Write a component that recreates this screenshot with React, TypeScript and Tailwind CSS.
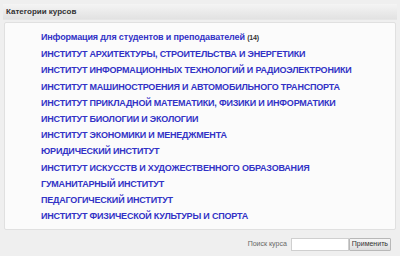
const categories = [
  'ИНСТИТУТ АРХИТЕКТУРЫ, СТРОИТЕЛЬСТВА И ЭНЕРГЕТИКИ',
  'ИНСТИТУТ ИНФОРМАЦИОННЫХ ТЕХНОЛОГИЙ И РАДИОЭЛЕКТРОНИКИ',
  'ИНСТИТУТ МАШИНОСТРОЕНИЯ И АВТОМОБИЛЬНОГО ТРАНСПОРТА',
  'ИНСТИТУТ ПРИКЛАДНОЙ МАТЕМАТИКИ, ФИЗИКИ И ИНФОРМАТИКИ',
  'ИНСТИТУТ БИОЛОГИИ И ЭКОЛОГИИ',
  'ИНСТИТУТ ЭКОНОМИКИ И МЕНЕДЖМЕНТА',
  'ЮРИДИЧЕСКИЙ ИНСТИТУТ',
  'ИНСТИТУТ ИСКУССТВ И ХУДОЖЕСТВЕННОГО ОБРАЗОВАНИЯ',
  'ГУМАНИТАРНЫЙ ИНСТИТУТ',
  'ПЕДАГОГИЧЕСКИЙ ИНСТИТУТ',
  'ИНСТИТУТ ФИЗИЧЕСКОЙ КУЛЬТУРЫ И СПОРТА',
]

export default function App() {
  return (
    <div
      className="w-[400px] h-[256px] overflow-hidden bg-[#efefef] pt-[4px]"
      style={{ fontFamily: '"Liberation Sans", Arial, sans-serif' }}
    >
      <div className="mx-[3px] h-[16px] flex items-center px-[3px] bg-gradient-to-b from-[#f4f4f4] to-[#e2e2e2] border-b border-[#e6e6e6]">
        <span className="text-[8px] font-bold text-[#333]">Категории курсов</span>
      </div>

      <div className="mx-[4px] mt-[2px] h-[208px] bg-[#fbfbfb] border border-[#e0e0e0] rounded-[2px] pl-[36px] pt-[8px]">
        <ul className="flex flex-col gap-[4px] text-[9px] leading-[12.2px] font-bold text-[#3232c6]">
          <li className="tracking-[-0.15px]">
            Информация для студентов и преподавателей{' '}
            <span className="text-[7px] text-[#333]">(14)</span>
          </li>
          {categories.map((c) => (
            <li key={c} className="tracking-[-0.2px]">{c}</li>
          ))}
        </ul>
      </div>

      <div className="flex items-center justify-end gap-[4px] pr-[9px] mt-[8px]">
        <span className="text-[7px] text-[#666]">Поиск курса</span>
        <div className="flex items-center">
          <input
            type="text"
            className="w-[58px] h-[13px] bg-white border border-[#cfcfcf] outline-none"
          />
          <button className="h-[13px] px-[2px] text-[7px] text-[#333] bg-gradient-to-b from-[#f6f6f6] to-[#dedede] border border-[#b8b8b8] rounded-[1px]">
            Применить
          </button>
        </div>
      </div>
    </div>
  )
}
